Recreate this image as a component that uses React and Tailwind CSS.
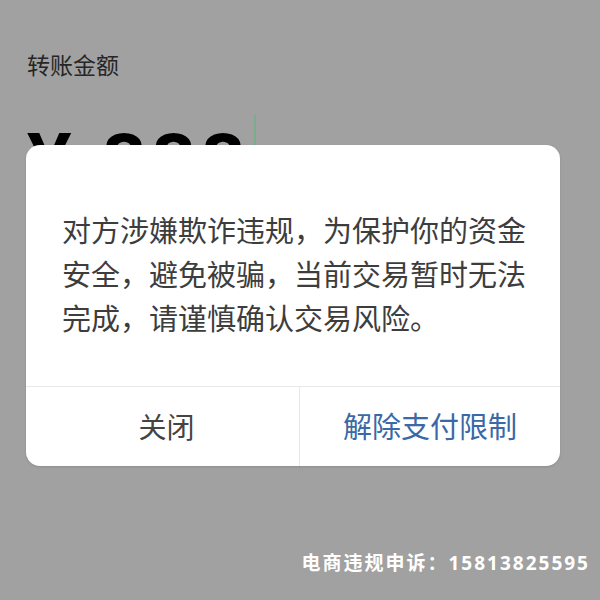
export default function App() {
  return (
    <div
      className="relative w-[600px] h-[600px] overflow-hidden bg-[#a1a1a1]"
      style={{ fontFamily: '"Noto Sans", "Noto Sans CJK SC", sans-serif' }}
    >
      {/* page behind the mask */}
      <div className="flex flex-col px-[27px] pt-[50px]">
        <div className="text-[23px] leading-[30px] text-[#262626]">转账金额</div>
        <div className="mt-[28px] flex items-start">
          <div className="flex items-start gap-[30px] font-bold text-[78px] leading-none text-black">
            <span className="mt-[13px]">¥</span>
            <span className="mt-[13px] tracking-[5px]">888</span>
          </div>
          <div className="ml-[4px] mt-[7px] h-[60px] w-[2px] bg-[#79ad8c]" />
        </div>
      </div>

      {/* dialog */}
      <div className="absolute left-[26px] top-[145px] w-[534px] rounded-[14px] bg-white shadow-sm">
        <p className="pl-[36px] pr-[18px] pt-[64px] pb-[45px] text-[29px] leading-[44px] text-[#3d3d3d]">
          对方涉嫌欺诈违规，为保护你的资金安全，避免被骗，当前交易暂时无法完成，请谨慎确认交易风险。
        </p>
        <div className="flex h-[80px] border-t border-[#e8e8e8]">
          <button className="w-[273px] pl-[8px] text-[28px] text-[#444]">关闭</button>
          <div className="w-px bg-[#e8e8e8]" />
          <button className="flex-1 text-[29px] text-[#3b68a6]">解除支付限制</button>
        </div>
      </div>

      {/* watermark */}
      <div className="absolute right-[10px] top-[549px] text-[19px] font-bold tracking-[2px] text-white">
        电商违规申诉：15813825595
      </div>
    </div>
  );
}
